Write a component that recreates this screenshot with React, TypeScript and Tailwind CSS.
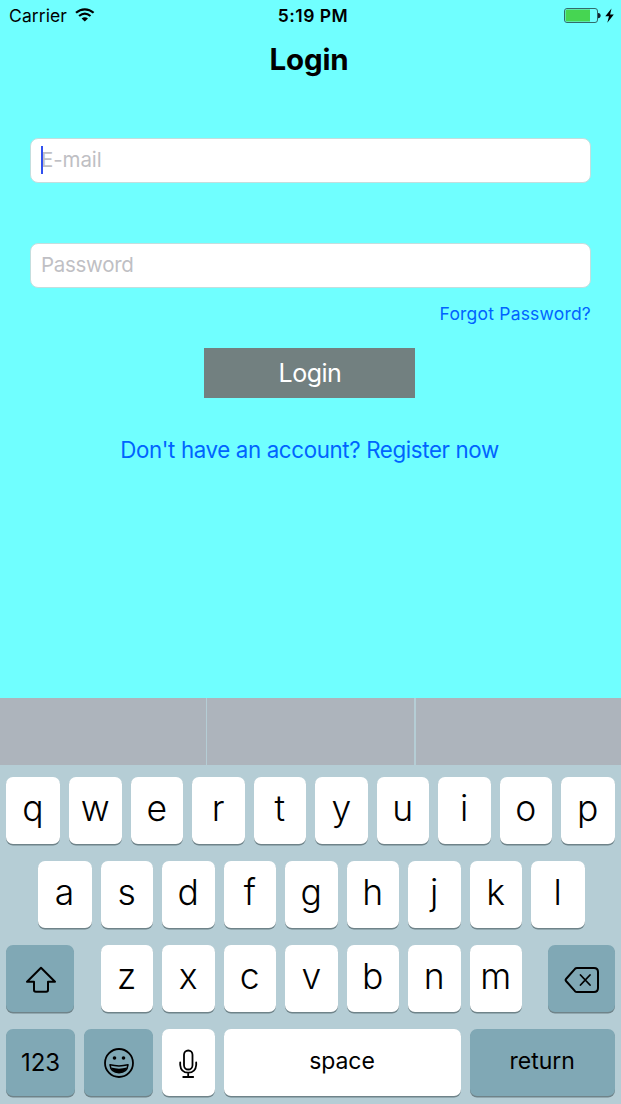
import type { ReactNode } from 'react';

function Key({ children, width = 'w-[52.5px]', dark = false, letter = false }: { children: ReactNode; width?: string; dark?: boolean; letter?: boolean }) {
  return (
    <button
      className={`${width} ${dark ? 'bg-[#80a8b5]' : 'bg-white'} ${letter ? 'pb-1 text-[35.5px] font-[360]' : 'text-[23px]'} flex h-[67px] shrink-0 items-center justify-center rounded-[7px] leading-none shadow-[0_1.5px_0_#6f8389]`}
    >
      {children}
    </button>
  );
}

function Letters({ keys, first, last }: { keys: string; first?: string; last?: string }) {
  return (
    <>
      {keys.split('').map((k, i) => (
        <Key key={k} letter width={i === 0 && first ? first : i === keys.length - 1 && last ? last : 'w-[52.5px]'}>
          {k}
        </Key>
      ))}
    </>
  );
}

function Wifi() {
  return (
    <svg width="20" height="14" viewBox="0 0 20 14" fill="none" stroke="black" strokeWidth="2.2" className="-mt-[2px]">
      <path d="M1 4.8C6.2 0.1 13.4 0.1 18.6 4.8" />
      <path d="M4.1 8C7.6 5 12 5 15.5 8" />
      <path d="M6.6 10.5Q9.8 7.8 13 10.5L9.8 13.6Z" fill="black" stroke="none" />
    </svg>
  );
}

function Battery() {
  return (
    <svg width="51" height="18" viewBox="0 0 51 18" className="-mt-px">
      <rect x="0.5" y="1.5" width="33" height="14" rx="2.5" fill="none" stroke="#326b6b" />
      <path d="M3 2.5H26V14.5H3Q1.5 14.5 1.5 13V4Q1.5 2.5 3 2.5Z" fill="#46d552" />
      <path d="M34 6C37.6 6 37.6 11.2 34 11.2Z" fill="#123" />
      <path d="M47.5 1.5L41.3 9.3H45L43.3 15.8L49.8 7.6H46.1Z" fill="black" />
    </svg>
  );
}

export default function App() {
  return (
    <div className="flex h-[1104px] w-[621px] flex-col overflow-hidden bg-[#70ffff] font-['Inter',sans-serif] text-black">
      <header className="grid h-8 grid-cols-3 items-center pr-[6px] pl-[9px] text-[17.5px]">
        <div className="flex items-center gap-2">
          <span className="tracking-[0.1px]">Carrier</span>
          <Wifi />
        </div>
        <span className="pl-[2px] text-center font-semibold tracking-[0.5px]">5:19 PM</span>
        <div className="flex justify-end">
          <Battery />
        </div>
      </header>

      <h1 className="h-14 pr-[3px] text-center text-[29.5px] leading-[55px] font-bold tracking-[-0.2px]">Login</h1>

      <form className="flex h-[610px] flex-col px-[30px] pt-[50px]">
        <div className="relative flex h-[45px] items-center rounded-[8px] border border-[#c3dede] bg-white px-[10px] text-[20.5px] tracking-[-0.1px] text-[#bfbfc4]">
          E-mail
          <span className="absolute top-[7px] left-[10px] h-[28px] w-[2px] bg-[#3150ee]" />
        </div>
        <div className="mt-[60px] flex h-[45px] items-center rounded-[8px] border border-[#c3dede] bg-white px-[10px] text-[20.5px] tracking-[-0.3px] text-[#bfbfc4]">Password</div>
        <a className="mt-[14px] self-end text-[17.5px] leading-6 tracking-[0.2px] text-[#0064ff]">Forgot Password?</a>
        <button type="button" className="mt-[22px] ml-[174px] h-[50px] w-[211px] bg-[#728080] pt-[2px] pl-[1px] text-[25px] tracking-[-0.5px] text-white">
          Login
        </button>
        <a className="mt-[37px] mr-[2px] self-center text-[22.3px] leading-[30px] tracking-[-0.36px] text-[#0064ff]">Don't have an account? Register now</a>
      </form>

      <section className="flex h-[406px] flex-col bg-[#b5cdd5]">
        <div className="flex h-[67px]">
          <div className="w-[206px] bg-[#adb4bc]" />
          <div className="ml-px w-[207px] bg-[#adb4bc]" />
          <div className="ml-[2px] flex-1 bg-[#adb4bc]" />
        </div>
        <div className="flex flex-col gap-[17px] pt-3">
          <div className="flex gap-[9px] pl-[6px]">
            <Letters keys="qwertyuiop" first="w-[54px]" last="w-[53.5px]" />
          </div>
          <div className="flex gap-[9px] pl-[37.5px]">
            <Letters keys="asdfghjkl" first="w-[54px]" last="w-[53.5px]" />
          </div>
          <div className="flex gap-[9px] pl-[6px]">
            <Key dark width="mr-[18px] w-[67.5px]">
              <svg width="32" height="28" viewBox="0 0 32 28" fill="none" stroke="black" strokeWidth="2" strokeLinejoin="round" className="mt-[2px] ml-[2px]">
                <path d="M16 1.8L2 15.7H9V24Q9 25.8 10.8 25.8H21.2Q23 25.8 23 24V15.7H30Z" />
              </svg>
            </Key>
            <Letters keys="zxcvbnm" />
            <Key dark width="ml-[16.5px] w-[67.5px]">
              <svg width="36" height="28" viewBox="0 0 36 28" fill="none" stroke="black" strokeWidth="2" strokeLinecap="round" strokeLinejoin="round" className="mt-[2px] ml-px">
                <path d="M13 2H30Q34 2 34 6V22Q34 26 30 26H13Q11.8 26 11 25.2L2 15Q1.2 14 2 13L11 2.8Q11.8 2 13 2Z" />
                <path d="M16.5 9L26 19M26 9L16.5 19" strokeWidth="1.8" />
              </svg>
            </Key>
          </div>
          <div className="flex gap-[9px] pl-[6px]">
            <Key dark width="w-[69px]">
              <span className="pt-px text-[24px]">123</span>
            </Key>
            <Key dark width="w-[69px]">
              <svg width="32" height="32" viewBox="0 0 32 32" fill="none" stroke="black" strokeWidth="1.8" className="mt-px">
                <circle cx="16" cy="16" r="14" />
                <circle cx="11.5" cy="11" r="1.8" fill="black" stroke="none" />
                <circle cx="20.5" cy="11" r="1.8" fill="black" stroke="none" />
                <path d="M7 17.8Q16 20 25 17.8Q24.2 25.3 16 25.7Q7.8 25.3 7 17.8Z" strokeWidth="1.5" strokeLinejoin="round" />
                <path d="M8.3 20.6Q16 22.7 23.7 20.6Q22 25.6 16 25.7Q10 25.6 8.3 20.6Z" fill="black" stroke="none" />
              </svg>
            </Key>
            <Key>
              <svg width="20" height="30" viewBox="0 0 20 30" fill="none" stroke="black" strokeWidth="1.8" strokeLinecap="round" className="mt-[2px]">
                <rect x="6" y="1.5" width="8.5" height="19" rx="4.25" />
                <path d="M2.2 13.5V16Q2.8 23.6 10.2 23.7Q17.6 23.6 18.2 16V13.5M10.2 23.7V28M5.2 28H15.2" />
              </svg>
            </Key>
            <Key width="w-[237px]">
              <span className="pb-[3px] tracking-[-0.1px]">space</span>
            </Key>
            <Key dark width="w-[145.5px]">
              <span className="pb-[3px]">return</span>
            </Key>
          </div>
        </div>
      </section>
    </div>
  );
}
